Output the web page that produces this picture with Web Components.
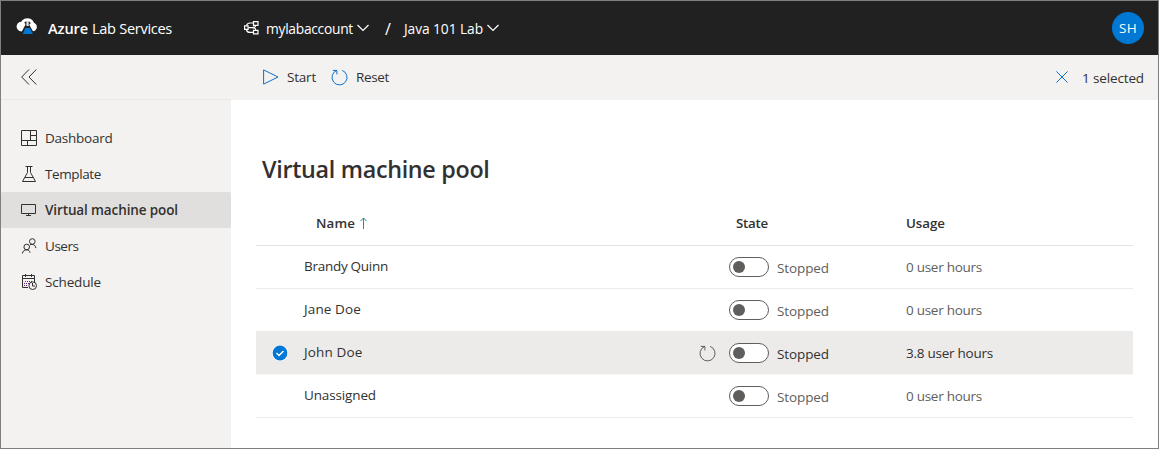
<!DOCTYPE html>
<html lang="en">
<head>
<meta charset="utf-8">
<title>Azure Lab Services</title>
<style>
html,body{margin:0;height:100%;overflow:hidden;background:#fff}
body{font-family:"Open Sans","Noto Sans",sans-serif;font-size:13.5px;line-height:20px;color:#323130}
</style>
</head>
<body>
<lab-app></lab-app>
<script>
const define = (name, html, setup) => {
  const template = document.createElement('template');
  template.innerHTML = html;
  customElements.define(name, class extends HTMLElement {
    connectedCallback() {
      if (this.shadowRoot) return;
      this.attachShadow({mode: 'open'}).append(template.content.cloneNode(true));
      if (setup) setup(this, this.shadowRoot);
    }
  });
};

/* A label whose tracking is adjusted so that it takes the given width. */
define('fit-text', `<style>:host{display:inline-block;white-space:nowrap;flex:none}span{display:inline-block}</style><span><slot></slot></span>`,
  (host, root) => {
    const span = root.querySelector('span');
    const target = Number(host.getAttribute('width'));
    host.style.width = target + 'px';
    const spacing = (target - span.getBoundingClientRect().width) / host.textContent.length;
    span.style.letterSpacing = spacing.toFixed(3) + 'px';
  });

const icons = {
  logo: [22, 18, `<path d="M5.5 8C6 3.8 8 1.7 11.4 1.7S16.800 3.800 17 8" stroke="#fff" stroke-width="3"/><circle cx="5.4" cy="8.600" r="4.800" fill="#fff"/><circle cx="16.700" cy="9" r="4.200" fill="#fff"/><path d="M11.400 3.400 18.500 16H4.500L9.800 6z" fill="#212121"/><path d="M10.400 3h2.300v5h-2.300z" fill="#ddd"/><path d="M9.200 10h4.700l3 5.900H6.900z" fill="#0078d4"/>`],
  lab: [16, 14, `<g stroke="#fff" stroke-width="1.2"><path d="M.6 4.900h3.500v3.500H.6zM9.500.7H14v3.600H9.500zM9.500 9.300H14v3.600H9.500z"/><path d="M2.500 4.500C3 2.800 4.500 2 6.200 2H9.500M2.500 9c.5 1.800 2 2.400 3.700 2.400h3.300M4.500 6.600h3.200c3 0 4-.6 4-2.100M7.700 6.700c3 0 4 .8 4 2.400"/></g>`],
  down: [12, 8, `<path d="M.5 1 6 6.500 11.500 1" stroke="#fff" stroke-width="1.2"/>`],
  collapse: [16, 16, `<path d="M8 .5.7 8 8 15.500M15.300.5 8 8l7.300 7.500" stroke="#323130"/>`],
  play: [16, 16, `<path d="M.6.9 15 8 .6 15.100z" stroke="#0f70c9"/>`],
  reset: [17, 17, `<path d="M5.600 1.500A7.500 7.500 0 1 0 11.200 1.400M1.800 1.400h4.100v4" stroke="currentColor" stroke-width="1"/>`],
  close: [12, 12, `<path d="m.4.4 11.200 11.200M11.600.4.4 11.600" stroke="#0f70c9"/>`],
  up: [8, 12, `<path d="M4.500 12V1M1.500 4l3-3 3 3" stroke="#2b8a80"/>`],
  dashboard: [16, 16, `<path d="M.5.5h15v15H.5zM.5 10.500h15M9.500.5v10M9.500 5.500h6M6.500 10.500v5"/>`],
  template: [16, 16, `<path d="M4.500.5h7M6.500.5v6l-5 9h13l-5-9v-6M3.800 11.500h8.400"/>`],
  pool: [16, 16, `<path d="M.5 2.500h14v9H.5zM5 13.500h5M7.500 11.500v2"/>`],
  users: [16, 16, `<circle cx="11.300" cy="3.500" r="2.800"/><circle cx="5.700" cy="9" r="2.800"/><path d="M1.500 15.500c0-2.200 1.800-3.700 4.100-3.700s3 1.200 3.500 3M9 6.800c2.800-1.100 5.500.1 5.900 3.300"/>`],
  schedule: [16, 16, `<path d="M7 13.500H1.500v-12h12V8M1.500 4.500h12M4.500 0v3M10.500 0v3"/><path d="M4 7.500h8M3 9.500h5M3 11.500h4" stroke-dasharray="1 1" stroke="#68217a"/><circle cx="11.700" cy="11.700" r="3.800"/><path d="M11.500 9v3H14"/>`]
};
define('lab-icon', `<style>:host{display:block;flex:none}svg{display:block;fill:none}</style>`, (host, root) => {
  const [w, h, body] = icons[host.getAttribute('name')];
  root.innerHTML += `<svg width="${w}" height="${h}" viewBox="0 0 ${w} ${h}" stroke="${host.getAttribute('stroke') || 'none'}">${body}</svg>`;
});

define('lab-header', `<style>
:host{display:grid;grid-template-columns:229px 1fr auto;height:54px;background:#212121;color:#fff;align-items:center;box-sizing:border-box}
.brand,.crumbs{display:flex;align-items:center;font-size:14.6px}
.brand{padding-left:15px}.brand fit-text:first-of-type{margin-left:10px;font-weight:600}.brand fit-text+fit-text{margin-left:4px}
.brand lab-icon{margin-top:-3px}
.crumbs{font-weight:500;padding:2px 0 0 14px;font-size:13.8px}.crumbs lab-icon:first-child{margin:-3px 6px 0 0}
.arrow{margin:-2px 0 0 4px}.slash{margin:0 13px 0 16px;font-size:16px}
.avatar{width:32px;height:32px;border-radius:50%;background:#0078d4;margin-right:14px;display:flex;align-items:center;justify-content:center}
</style>
<div class="brand"><lab-icon name="logo"></lab-icon><fit-text width="40">Azure</fit-text><fit-text width="80">Lab Services</fit-text></div>
<div class="crumbs"><lab-icon name="lab"></lab-icon><fit-text width="87">mylabaccount</fit-text><lab-icon class="arrow" name="down"></lab-icon><fit-text class="slash" width="6">/</fit-text><fit-text width="79">Java 101 Lab</fit-text><lab-icon class="arrow" name="down"></lab-icon></div>
<div class="avatar"><fit-text width="18">SH</fit-text></div>`);

define('lab-toolbar', `<style>
:host{display:flex;height:45px;background:#f3f2f1;align-items:center;box-sizing:border-box;padding:0 14px 1px 20px}
.cmd{display:flex;align-items:center;gap:8px;color:#323130}.cmd lab-icon{color:#0f70c9}
.cmd.start{margin-left:226px}.cmd.reset{margin-left:15px}.sel{margin-left:auto;gap:14px}
.sel fit-text{margin-top:1px}
</style>
<lab-icon name="collapse"></lab-icon>
<div class="cmd start"><lab-icon name="play"></lab-icon><fit-text width="29">Start</fit-text></div>
<div class="cmd reset"><lab-icon name="reset"></lab-icon><fit-text width="33">Reset</fit-text></div>
<div class="cmd sel"><lab-icon name="close"></lab-icon><fit-text width="62">1 selected</fit-text></div>`);

define('nav-item', `<style>
:host{display:flex;align-items:center;height:36px;padding-left:20px;gap:8px;border-radius:2px}
:host([active]){background:#e1dfdd;font-weight:600}
</style><slot></slot>`, (host, root) => {
  const icon = document.createElement('lab-icon');
  icon.setAttribute('name', host.getAttribute('icon'));
  icon.setAttribute('stroke', '#323130');
  root.querySelector('slot').before(icon);
});

define('lab-nav', `<style>:host{display:block;width:230px;background:#f3f2f1;box-sizing:border-box;border-top:1px solid #eae8e6;margin-top:-1px;padding-top:20px}</style>
<nav-item icon="dashboard"><fit-text width="67.5">Dashboard</fit-text></nav-item>
<nav-item icon="template"><fit-text width="56">Template</fit-text></nav-item>
<nav-item icon="pool" active><fit-text width="133">Virtual machine pool</fit-text></nav-item>
<nav-item icon="users"><fit-text width="33.5">Users</fit-text></nav-item>
<nav-item icon="schedule"><fit-text width="56">Schedule</fit-text></nav-item>`);

define('state-toggle', `<style>
:host{display:block;box-sizing:border-box;width:40px;height:20px;border:1px solid #605e5c;border-radius:10px;background:#fff;padding:3px}
i{display:block;width:12px;height:12px;border-radius:50%;background:#605e5c}
</style><i></i>`);

define('vm-row', `<style>
:host{display:grid;grid-template-columns:48px 395px 30px 48px 129px 1fr;height:43px;box-sizing:border-box;border-bottom:1px solid #edebe9;align-items:center;color:#605e5c}
:host([selected]){background:#edebe9;color:#323130;border-bottom-color:#f8f7f6;background-clip:padding-box}
.check{width:16px;height:16px;margin-left:16px;visibility:hidden}
.reset{visibility:hidden;color:#605e5c}
:host([selected]) .check,:host([selected]) .reset{visibility:visible}
.name{color:#323130;margin-top:-2px}
.state{margin-top:1px}
svg{display:block}
</style>
<div class="check"><svg width="16" height="16" viewBox="0 0 16 16"><circle cx="8" cy="8" r="8" fill="#fff"/><circle cx="8" cy="8" r="7.400" fill="#0078d4"/><path d="m4.500 8 2.500 2.500 4.500-4.600" fill="none" stroke="#fff" stroke-width="1.400"/></svg></div>
<div class="name"><slot name="name"></slot></div>
<lab-icon class="reset" name="reset"></lab-icon>
<state-toggle></state-toggle>
<div class="state"><fit-text width="52">Stopped</fit-text></div>
<div><slot name="usage"></slot></div>`);

define('vm-table', `<style>
:host{display:block;width:877px;margin:12px 0 0 25px}
.head{display:grid;grid-template-columns:60px 420px 170px 1fr;height:49px;box-sizing:border-box;border-bottom:1px solid #e5e3e1;align-items:center;padding-top:3px;font-weight:600;font-size:13.300px}
.name{display:flex;align-items:center;gap:4px}
.name lab-icon{margin-top:1px}
</style>
<div class="head"><span></span><span class="name"><fit-text width="39">Name</fit-text><lab-icon name="up"></lab-icon></span><fit-text width="32">State</fit-text><fit-text width="39">Usage</fit-text></div>
<vm-row><fit-text slot="name" width="84">Brandy Quinn</fit-text><fit-text slot="usage" width="76">0 user hours</fit-text></vm-row>
<vm-row><fit-text slot="name" width="57">Jane Doe</fit-text><fit-text slot="usage" width="76">0 user hours</fit-text></vm-row>
<vm-row selected><fit-text slot="name" width="58.5">John Doe</fit-text><fit-text slot="usage" width="87">3.8 user hours</fit-text></vm-row>
<vm-row><fit-text slot="name" width="72">Unassigned</fit-text><fit-text slot="usage" width="76">0 user hours</fit-text></vm-row>`);

define('lab-app', `<style>
:host{display:flex;flex-direction:column;box-sizing:border-box;width:1159px;height:449px;border:1px solid #7f7f7f;background:#fff}
.body{display:flex;flex:1;min-height:0}
h1{margin:53px 0 0 31px;font-size:23.300px;line-height:32px;font-weight:550}
</style>
<lab-header></lab-header><lab-toolbar></lab-toolbar>
<div class="body"><lab-nav></lab-nav><main><h1><fit-text width="227.5">Virtual machine pool</fit-text></h1><vm-table></vm-table></main></div>`);
</script>
</body>
</html>
